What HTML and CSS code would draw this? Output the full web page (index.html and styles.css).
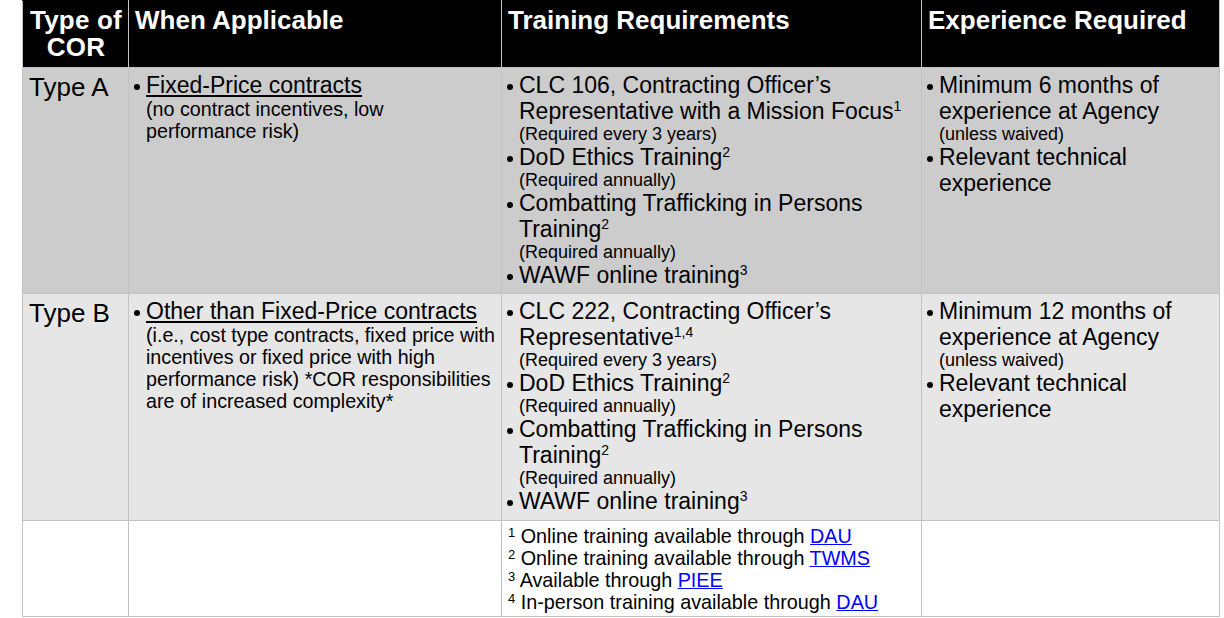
FILE: index.html
```html
<!DOCTYPE html>
<html lang="en">
<head>
<meta charset="utf-8">
<title>COR Types</title>
<link rel="stylesheet" href="styles.css">
</head>
<body>
<table class="cor">
  <colgroup>
    <col class="c1"><col class="c2"><col class="c3"><col class="c4">
  </colgroup>
  <thead>
    <tr class="head">
      <th class="h-type">Type of<br>COR</th>
      <th>When Applicable</th>
      <th>Training Requirements</th>
      <th>Experience Required</th>
    </tr>
  </thead>
  <tbody>
    <tr class="row-a">
      <td class="type">Type A</td>
      <td class="when">
        <ul class="bul">
          <li><span class="u">Fixed-Price contracts</span><span class="note">(no contract incentives, low performance risk)</span></li>
        </ul>
      </td>
      <td class="train">
        <ul class="bul">
          <li>CLC 106, Contracting Officer’s Representative with a Mission Focus<sup>1</sup><span class="small">(Required every 3 years)</span></li>
          <li>DoD Ethics Training<sup>2</sup><span class="small">(Required annually)</span></li>
          <li>Combatting Trafficking in Persons Training<sup>2</sup><span class="small">(Required annually)</span></li>
          <li>WAWF online training<sup>3</sup></li>
        </ul>
      </td>
      <td class="exp">
        <ul class="bul">
          <li>Minimum 6 months of experience at Agency<span class="small">(unless waived)</span></li>
          <li>Relevant technical experience</li>
        </ul>
      </td>
    </tr>
    <tr class="row-b">
      <td class="type">Type B</td>
      <td class="when">
        <ul class="bul">
          <li><span class="u">Other than Fixed-Price contracts</span><span class="note">(i.e., cost type contracts, fixed price with incentives or fixed price with high performance risk) *COR responsibilities are of increased complexity*</span></li>
        </ul>
      </td>
      <td class="train">
        <ul class="bul">
          <li>CLC 222, Contracting Officer’s Representative<sup>1,4</sup><span class="small">(Required every 3 years)</span></li>
          <li>DoD Ethics Training<sup>2</sup><span class="small">(Required annually)</span></li>
          <li>Combatting Trafficking in Persons Training<sup>2</sup><span class="small">(Required annually)</span></li>
          <li>WAWF online training<sup>3</sup></li>
        </ul>
      </td>
      <td class="exp">
        <ul class="bul">
          <li>Minimum 12 months of experience at Agency<span class="small">(unless waived)</span></li>
          <li>Relevant technical experience</li>
        </ul>
      </td>
    </tr>
    <tr class="foot">
      <td></td>
      <td></td>
      <td class="fn">
        <div><sup>1</sup> Online training available through <a href="#">DAU</a></div>
        <div><sup>2</sup> Online training available through <a href="#">TWMS</a></div>
        <div><sup>3</sup> Available through <a href="#">PIEE</a></div>
        <div><sup>4</sup> In-person training available through <a href="#">DAU</a></div>
      </td>
      <td></td>
    </tr>
  </tbody>
</table>
</body>
</html>
```
FILE: styles.css
```css
body {
  margin: 0;
  background: #ffffff;
  font-family: "Liberation Sans", Arial, sans-serif;
  color: #000000;
}

.cor {
  margin-left: 22px;
  border-collapse: collapse;
  table-layout: fixed;
  width: 1197px;
}

.c1 { width: 106px; }
.c2 { width: 373px; }
.c3 { width: 420px; }
.c4 { width: 298px; }

.cor th,
.cor td {
  border: 1px solid #c3c3c3;
  vertical-align: top;
  text-align: left;
  padding: 4px 2px 0 4px;
}

.head { height: 67px; }

.cor thead th {
  background: #000000;
  color: #ffffff;
  border-top-color: #000000;
  font-size: 26px;
  line-height: 27px;
  font-weight: bold;
  padding: 6px 2px 0 6px;
}

.cor thead th.h-type {
  text-align: center;
  padding: 6px 0 0 1px;
  letter-spacing: 0.2px;
}

.row-a { height: 226px; }
.row-a td { background: #cccccc; }

.row-b { height: 227px; }
.row-b td { background: #e6e6e6; }

.foot { height: 96px; }
.foot td { background: #ffffff; }

.cor td.type {
  font-size: 26px;
  line-height: 30px;
  padding-left: 6px;
}

.bul {
  margin: 0;
  padding: 0;
  list-style: none;
}

.bul li {
  padding-left: 13px;
  font-size: 23px;
  line-height: 26px;
}

.bul li::before {
  content: "";
  display: inline-block;
  width: 6px;
  height: 6px;
  border-radius: 50%;
  background: #000000;
  margin-left: -12px;
  margin-right: 6px;
  vertical-align: middle;
}

.u { text-decoration: underline; }

.note {
  display: block;
  font-size: 19.7px;
  line-height: 22px;
}

.small {
  display: block;
  font-size: 18px;
  line-height: 20px;
}

sup {
  font-size: 14px;
  line-height: 0;
  vertical-align: 8px;
}

.cor td.fn {
  font-size: 19.8px;
  line-height: 22px;
  padding-left: 6px;
}

.fn sup {
  font-size: 13px;
  vertical-align: 6px;
}

.fn a {
  color: #0000ff;
  text-decoration: underline;
}
```
